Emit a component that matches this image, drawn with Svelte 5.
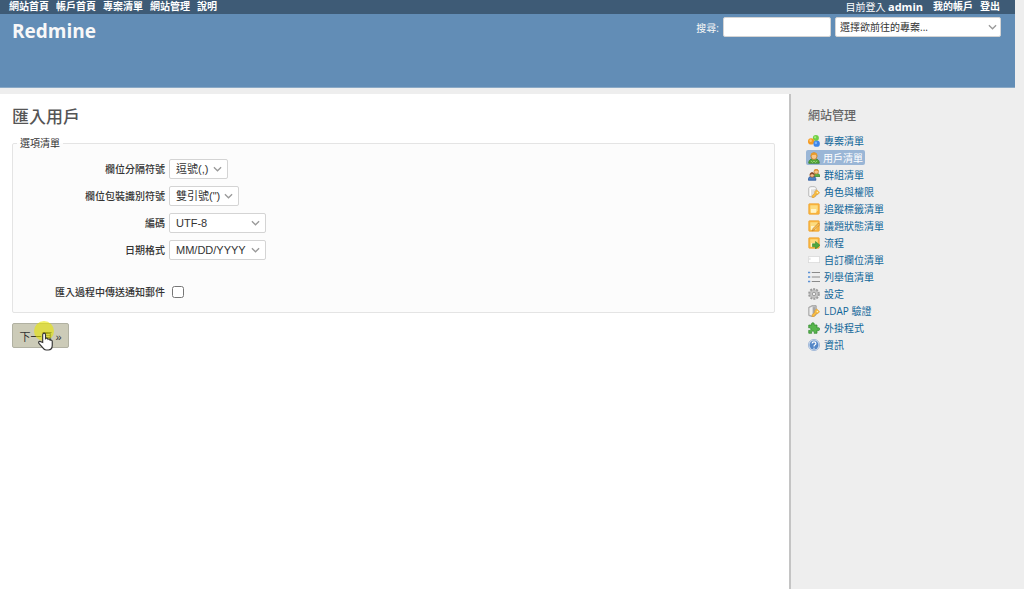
<script>
    let menu = ["網站首頁", "帳戶首頁", "專案清單", "網站管理", "說明"];

    let fields = [
        { id: "separator", label: "欄位分隔符號", options: ["逗號(,)", "分號(;)"], size: "short" },
        { id: "wrapper", label: "欄位包裝識別符號", options: ["雙引號(\")", "引號(')"], size: "medium" },
        { id: "encoding", label: "編碼", options: ["UTF-8", "Big5"], size: "long" },
        { id: "date_format", label: "日期格式", options: ["MM/DD/YYYY", "YYYY-MM-DD"], size: "long" }
    ];

    let admin = [
        { icon: "projects", name: "專案清單" },
        { icon: "user", name: "用戶清單", selected: true },
        { icon: "group", name: "群組清單" },
        { icon: "roles", name: "角色與權限" },
        { icon: "tracker", name: "追蹤標籤清單" },
        { icon: "status", name: "議題狀態清單" },
        { icon: "workflow", name: "流程" },
        { icon: "field", name: "自訂欄位清單" },
        { icon: "list", name: "列舉值清單" },
        { icon: "settings", name: "設定" },
        { icon: "ldap", name: "LDAP 驗證" },
        { icon: "plugin", name: "外掛程式" },
        { icon: "info", name: "資訊" }
    ];
</script>

{#snippet chevron()}
    <svg class="chevron" viewBox="0 0 10 6" aria-hidden="true"><path d="M1 1l4 4 4-4" fill="none" stroke="#999" stroke-width="1.4" /></svg>
{/snippet}

{#snippet key()}
    <path d="M11.5 5l4 4-2.5 2.5-2 0L8 15.500H5.500V13l3.500-3.500V7.500z" fill="#f8bd42" stroke="#d8942c" stroke-width=".7" />
    <circle cx="12.5" cy="8.5" r="1" fill="#fff3c0" />
{/snippet}

{#snippet note()}
    <rect x="1" y="1" width="14" height="14" rx="1" fill="#f9b43c" stroke="#eda636" />
    <path d="M3 3h10v7l-3 3H3z" fill="#fddc80" />
    <path d="M4 8h7v5H4z" fill="#fff4c8" />
{/snippet}

{#snippet icon(name)}
    <svg class="icon" viewBox="0 0 16 16" aria-hidden="true">
        {#if name == "projects"}
            <circle cx="10.5" cy="4" r="4" fill="#6fcf45" />
            <circle cx="9.5" cy="3" r="1.5" fill="#aaeb83" />
            <circle cx="4.2" cy="8.5" r="4.2" fill="#f59b22" />
            <circle cx="3.5" cy="7.5" r="1.7" fill="#ffc66b" />
            <circle cx="11.5" cy="11.5" r="4.3" fill="#3d86ea" />
            <circle cx="10.5" cy="10.5" r="1.7" fill="#7db4fb" />
        {:else if name == "user"}
            <path d="M1 15c0-4 2-6 7-6s7 2 7 6z" fill="#55a83a" stroke="#2f7a20" />
            <path d="M4 12l2 2 2-2 2 2 2-2" fill="none" stroke="#a1d987" />
            <ellipse cx="8" cy="5.5" rx="4" ry="4.5" fill="#f7c78a" stroke="#b8721d" />
            <path d="M3.5 6C3 2 5 .5 8 .5S13 2 12.5 6L10 3.5 6 4z" fill="#e79a2b" />
        {:else if name == "group"}
            <path d="M7 10c0-3 1-4 4-4s5 1 5 4z" fill="#5dad43" stroke="#38832a" />
            <circle cx="11" cy="3.5" r="3" fill="#f5c48b" stroke="#c38131" />
            <path d="M8 3c0-4 6-4 6 0l-3-1z" fill="#df9330" />
            <path d="M.5 15c0-4 1-5 5-5s5 1 5 5z" fill="#4d83c7" stroke="#2a5699" />
            <circle cx="5.5" cy="8" r="3" fill="#f4bd8d" stroke="#9b5528" />
            <path d="M2.5 8c0-5 6-5 6 0l-3-1.5z" fill="#88492b" />
        {:else if name == "roles"}
            <path d="M1 3c0-3 10-3 10 0v10c0 2-10 2-10 0z" fill="#dedede" stroke="#aaa" />
            <path d="M3 4v9" stroke="#fff" stroke-width="2" />
            <ellipse cx="6" cy="3" rx="4.5" ry="1.5" fill="#f8f8f8" />
            {@render key()}
        {:else if name == "tracker"}
            {@render note()}
        {:else if name == "status"}
            {@render note()}
            <path d="M14 4l2 2-7 7-3.5 1.5L7 11z" fill="#f8bc4c" stroke="#b97727" stroke-width=".8" />
        {:else if name == "workflow"}
            {@render note()}
            <path d="M6 9h4V6l6 5-6 5v-3H6z" fill="#4ea83e" stroke="#2c7e26" stroke-width=".7" />
        {:else if name == "field"}
            <rect x=".5" y="3.5" width="15" height="8" fill="#fff" stroke="#d8d8d8" />
            <path d="M2.5 5v3" stroke="#ccc" />
        {:else if name == "list"}
            <path d="M5 2h11M5 8h11M5 14h11" stroke="#8a8a8a" stroke-width="1.6" />
            <path d="M0 2h3M0 8h3M0 14h3" stroke="#5b91d4" stroke-width="2" />
        {:else if name == "settings"}
            <circle cx="8" cy="8" r="6.5" fill="none" stroke="#999" stroke-width="2.6" stroke-dasharray="2.6 1.5" />
            <circle cx="8" cy="8" r="5.5" fill="#c6c6c6" stroke="#a2a2a2" />
            <circle cx="8" cy="8" r="2.3" fill="#eee" stroke="#888" />
        {:else if name == "ldap"}
            <path d="M1 3l6-3 4 1v12l-4 3-6-2z" fill="#bbb" stroke="#999" />
            <path d="M2 4l4-2v12l-4-1z" fill="#eee" />
            <path d="M8 3v10" stroke="#888" />
            {@render key()}
        {:else if name == "plugin"}
            <path d="M1 4h4c-2-4 5-4 3 0h4v4c5-2 5 5 0 3v4H8c2-4-5-4-3 0H1v-4c4 2 4-5 0-3z" fill="#58b64d" stroke="#348b31" />
        {:else}
            <circle cx="8" cy="8" r="7.5" fill="#dce7f5" stroke="#91acd0" />
            <circle cx="8" cy="8" r="6" fill="#5487c7" />
            <path d="M5.5 6c0-3 5-3 5 0 0 2-2.5 1.5-2.5 4M8 11.5V13" fill="none" stroke="#fff" stroke-width="1.6" />
        {/if}
    </svg>
{/snippet}

<div class="wrapper">
    <nav class="top-menu">
        <ul>
            {#each menu as item}
                <li><a href="#top">{item}</a></li>
            {/each}
        </ul>
        <div class="account">
            <span class="logged">目前登入 <a href="#admin">admin</a></span>
            <a href="#account">我的帳戶</a>
            <a href="#logout">登出</a>
        </div>
    </nav>

    <header>
        <h1>Redmine</h1>
        <form class="quick-search">
            <label for="q">搜尋:</label>
            <input id="q" type="text" />
            <span class="select jump">
                <select aria-label="選擇專案">
                    <option>選擇欲前往的專案...</option>
                </select>
                {@render chevron()}
            </span>
        </form>
    </header>

    <div class="columns">
        <main>
            <h2>匯入用戶</h2>
            <form>
                <fieldset>
                    <legend>選項清單</legend>
                    {#each fields as field}
                        <div class="row">
                            <label for={field.id}>{field.label}</label>
                            <span class="select {field.size}">
                                <select id={field.id}>
                                    {#each field.options as option}
                                        <option>{option}</option>
                                    {/each}
                                </select>
                                {@render chevron()}
                            </span>
                        </div>
                    {/each}
                    <div class="row notify">
                        <label for="notifications">匯入過程中傳送通知郵件</label>
                        <input id="notifications" type="checkbox" />
                    </div>
                </fieldset>
                <div class="submit">
                    <button type="button">下一頁 »</button>
                    <span class="spot"></span>
                    <svg class="hand" viewBox="0 0 16 20" aria-hidden="true">
                        <path d="M5 11V3c0-2.5 3-2.5 3 0v4c1-1 2.5-.5 2.7.7 1-.7 2.2-.2 2.300.9 1-.5 2.2.1 2.2 1.4v4c0 3-1.7 5-4.2 5H8.5c-1.5 0-2.5-1-3.5-2.5L1 12c-1-1.8 1-2.8 2.2-1.6z" fill="#fff" stroke="#333" stroke-width="1.2" />
                    </svg>
                </div>
            </form>
        </main>

        <aside>
            <h3>網站管理</h3>
            <ul>
                {#each admin as item}
                    <li><a href="#{item.icon}" class:selected={item.selected}>{@render icon(item.icon)}{item.name}</a></li>
                {/each}
            </ul>
        </aside>
    </div>
</div>

<style>
    :global(body) {
        background: #eee;
    }
    .wrapper {
        display: flex;
        flex-direction: column;
        min-height: 100vh;
        font-family: "Open Sans", "Noto Sans CJK TC", sans-serif;
        font-size: 10px;
        color: #333;
    }
    ul {
        list-style: none;
        margin: 0;
        padding: 0;
    }
    a {
        text-decoration: none;
    }
    input, select, button {
        box-sizing: border-box;
        margin: 0;
        font-family: "Liberation Sans", "Noto Sans CJK TC", sans-serif;
        font-size: 11px;
        color: #333;
    }
    .top-menu {
        display: flex;
        justify-content: space-between;
        height: 14px;
        margin-right: 9px;
        padding: 0 15px 0 9px;
        line-height: 13px;
        background: #3e5b76;
        color: #fff;
    }
    .top-menu ul, .account {
        display: flex;
        gap: 7px;
    }
    .top-menu a {
        color: #fff;
        font-weight: bold;
    }
    .logged {
        margin-right: 3px;
    }
    .logged a {
        font-size: 11px;
    }
    header {
        display: flex;
        justify-content: space-between;
        align-items: flex-start;
        box-sizing: border-box;
        height: 74px;
        margin-right: 9px;
        padding: 3px 14px 0 12px;
        background: #628db6;
        border-bottom: 1px solid #8aa9c6;
        color: #f8f8f8;
    }
    h1 {
        margin: 0;
        font-size: 19px;
        line-height: 28px;
    }
    .quick-search {
        display: flex;
        align-items: center;
        gap: 4px;
    }
    .quick-search input {
        width: 108px;
        height: 20px;
        border: 1px solid #d4d4d4;
        border-radius: 2px;
        background: #fff;
    }
    .select {
        position: relative;
        display: block;
    }
    select {
        appearance: none;
        display: block;
        width: 100%;
        height: 20px;
        padding: 0 16px 0 6px;
        border: 1px solid #d4d4d4;
        border-radius: 2px;
        background: #fff;
    }
    .chevron {
        position: absolute;
        top: 7px;
        right: 6px;
        width: 9px;
        height: 6px;
        pointer-events: none;
    }
    .jump {
        width: 166px;
    }
    .jump select {
        padding-left: 4px;
        font-family: "Open Sans", "Noto Sans CJK TC", sans-serif;
        font-size: 10px;
    }
    .jump .chevron {
        right: 4px;
    }
    .short {
        width: 59px;
    }
    .medium {
        width: 70px;
    }
    .long {
        width: 97px;
    }
    .columns {
        display: flex;
        flex: 1;
        margin-top: 6px;
    }
    main {
        flex: 1;
        padding: 9px 14px 0 12px;
        background: #fff;
        border-right: 2px solid #c4c4c4;
    }
    h2 {
        margin: 0;
        font-size: 17px;
        font-weight: 500;
        line-height: 28px;
        color: #555;
    }
    fieldset {
        margin: 5px 0 0;
        padding: 9px 0 10px;
        border: 1px solid #e4e4e4;
        border-radius: 2px;
        background: #fcfcfc;
    }
    legend {
        margin-left: 4px;
        padding: 0 3px;
        line-height: 14px;
    }
    .row {
        display: flex;
        align-items: center;
        gap: 4px;
        height: 20px;
        margin-bottom: 7px;
    }
    .row label {
        width: 152px;
        padding-bottom: 2px;
        text-align: right;
        font-weight: 500;
    }
    .notify {
        margin: 22px 0 0;
    }
    .notify input {
        width: 12px;
        height: 12px;
        margin-left: 3px;
    }
    .submit {
        position: relative;
        width: 57px;
        margin-top: 10px;
    }
    button {
        width: 100%;
        height: 25px;
        padding: 0;
        border: 1px solid #b1b1a2;
        border-radius: 2px;
        background: #cccbb8;
        white-space: nowrap;
    }
    .spot {
        position: absolute;
        top: -2px;
        left: 22px;
        width: 20px;
        height: 20px;
        border-radius: 50%;
        background: #e8e60099;
        pointer-events: none;
    }
    .hand {
        position: absolute;
        top: 9px;
        left: 26px;
        width: 15px;
        height: 19px;
        pointer-events: none;
    }
    aside {
        width: 216px;
        padding: 12px 0 0 17px;
    }
    h3 {
        margin: 0 0 6px;
        font-size: 12px;
        font-weight: 500;
        line-height: 20px;
        color: #666;
    }
    aside li {
        display: flex;
        height: 17px;
    }
    aside a {
        display: flex;
        align-items: center;
        gap: 4px;
        color: #169;
    }
    aside .selected {
        gap: 3px;
        height: 15px;
        margin-left: -2px;
        padding: 0 2px;
        margin-top: 1px;
        border-radius: 2px;
        background: #9ab6d6;
        color: #fff;
    }
    .icon {
        width: 12px;
        height: 12px;
    }
</style>
